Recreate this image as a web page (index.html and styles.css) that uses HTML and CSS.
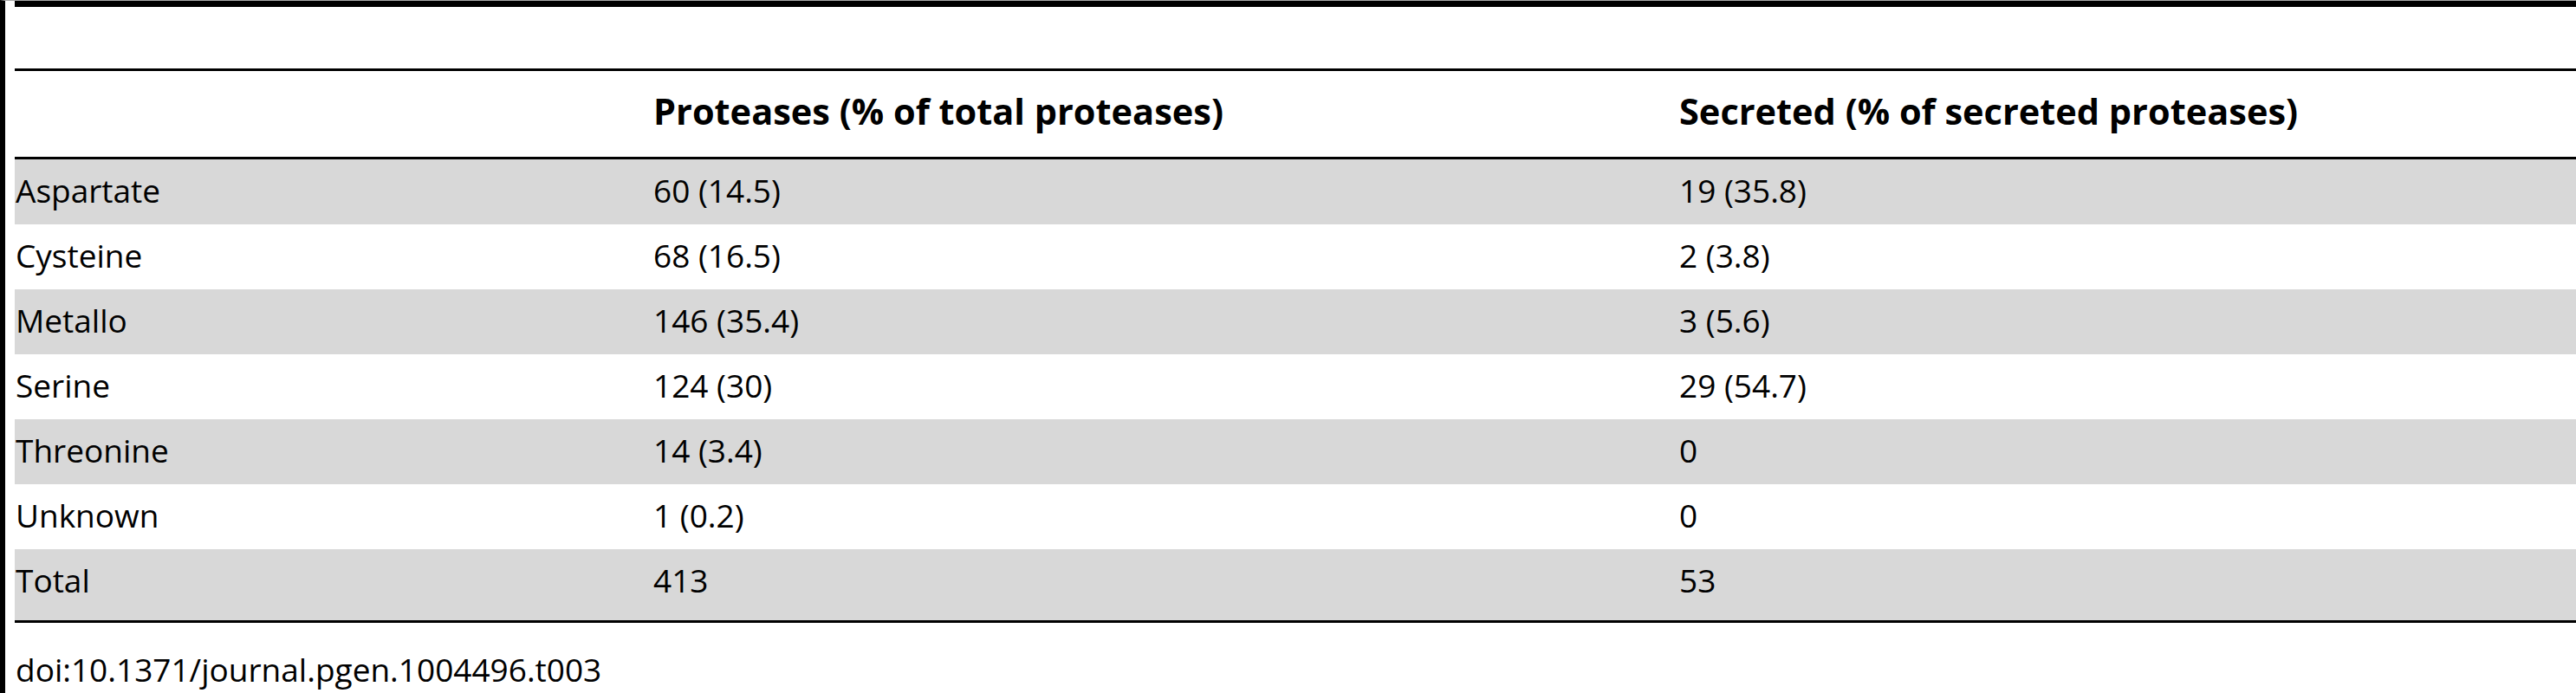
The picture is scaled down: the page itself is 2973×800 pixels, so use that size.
FILE: index.html
```html
<!DOCTYPE html>
<html lang="en">
<head>
<meta charset="utf-8">
<title>Table 3</title>
<link rel="stylesheet" href="styles.css">
</head>
<body>
<div class="page">
  <div class="rule-top"></div>
  <div class="title-space"></div>
  <table class="data">
    <colgroup>
      <col class="c1">
      <col class="c2">
      <col class="c3">
    </colgroup>
    <thead>
      <tr>
        <th></th>
        <th>Proteases (% of total proteases)</th>
        <th>Secreted (% of secreted proteases)</th>
      </tr>
    </thead>
    <tbody>
      <tr class="shade"><td>Aspartate</td><td>60 (14.5)</td><td>19 (35.8)</td></tr>
      <tr><td>Cysteine</td><td>68 (16.5)</td><td>2 (3.8)</td></tr>
      <tr class="shade"><td>Metallo</td><td>146 (35.4)</td><td>3 (5.6)</td></tr>
      <tr><td>Serine</td><td>124 (30)</td><td>29 (54.7)</td></tr>
      <tr class="shade"><td>Threonine</td><td>14 (3.4)</td><td>0</td></tr>
      <tr><td>Unknown</td><td>1 (0.2)</td><td>0</td></tr>
      <tr class="shade last"><td>Total</td><td>413</td><td>53</td></tr>
    </tbody>
  </table>
  <div class="doi">doi:10.1371/journal.pgen.1004496.t003</div>
</div>
</body>
</html>
```

FILE: styles.css
```css
html, body {
  margin: 0;
  padding: 0;
  background: #ffffff;
}

body {
  font-family: "Open Sans", "Noto Sans", "Liberation Sans", sans-serif;
  font-size: 37px;
  color: #000000;
}

.page {
  box-sizing: border-box;
  min-height: 800px;
  border-left: 6px solid #000000;
  border-top: 1px solid #a8a8a8;
  padding-left: 11px;
}

.rule-top {
  height: 7px;
  background: #000000;
}

.title-space {
  height: 71px;
}

.data {
  width: 100%;
  table-layout: fixed;
  border-collapse: separate;
  border-spacing: 0;
}

.c1 { width: 736px; }
.c2 { width: 1184px; }
.c3 { width: auto; }

.data th,
.data td {
  text-align: left;
  vertical-align: top;
  padding: 0 0 0 1px;
  white-space: nowrap;
}

.data th {
  font-size: 41.5px;
  font-weight: 700;
  line-height: 57px;
  padding-top: 18px;
  padding-bottom: 24px;
  border-top: 3px solid #000000;
  border-bottom: 3px solid #000000;
}

.data td {
  font-weight: 400;
  line-height: 51px;
  padding-top: 10px;
  padding-bottom: 14px;
}

.data tr.shade td {
  background: #d8d8d8;
}

.data tr.last td {
  padding-bottom: 21px;
  border-bottom: 3px solid #000000;
}

.doi {
  margin-top: 28px;
  padding-left: 1px;
  line-height: normal;
}
```
